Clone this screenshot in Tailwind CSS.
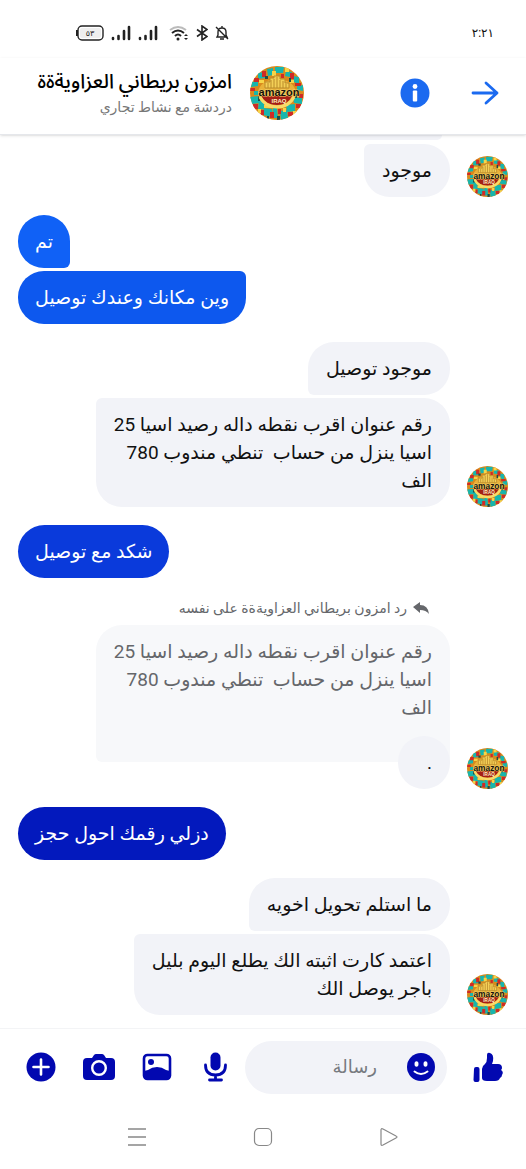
<!DOCTYPE html>
<html lang="ar" dir="rtl">
  <head>
    <meta charset="UTF-8" />
    <meta name="viewport" content="width=device-width, initial-scale=1.0" />
    <script src="https://cdn.jsdelivr.net/npm/@tailwindcss/browser@4"></script>
    <title>امزون بريطاني العزاويةةة</title>
  </head>
  <body class="bg-white text-[#111] font-['Roboto','DejaVu_Sans',sans-serif]">
    <!-- Shared avatar -->
    <svg class="hidden">
      <symbol id="avatar" viewBox="0 0 54 54">
        <rect width="54" height="54" fill="#d98a1c" />
        <path fill="#18b5ad" d="M8 7l6-1 1 6-7 1zM17 3l6-1v7l-5 1zM25 1h9l-1 6h-8zM36 5l6 1-2 5-5-1zM43 10l6 1v7l-5-2zM2 16l6-1v5l-7 1zM0 31l9-1v7l-8 1zM9 34l5 1v8l-6 1zM14 42l8 1v8l-9-2zM23 42h4l1 10h-6zM30 45l7-1 1 8-7 2zM36 39l9-1v7l-8 1zM43 31l9 1v6l-8-1zM47 20l6-1v6l-6-1zM4 25h5v4H4z" />
        <path fill="#cf2a27" d="M12 5h4v6h-4zM31 8h3v4h-3zM40 7h4v6h-4zM4 12h5v4H4zM45 17h6v3h-6zM0 22h5v3H0zM3 38h5v5H3zM11 44h3v5h-3zM20 46h4v6h-4zM28 43h3v5h-3zM38 46h5v4h-5zM46 38h5v4h-5zM49 28h4v4h-4z" />
        <path fill="#f7d548" d="M22 5h4v5h-4zM35 2h4v4h-4zM9 14h5v3H9zM40 14h4v3h-4zM14 39h7v3h-7zM33 42h3v4h-3zM8 43h3v4H8zM43 45h4v4h-4z" />
        <path fill="#1c4d4a" d="M15 10h3v3h-3zM39 12h2v4h-2zM8 30h2v5H8zM27 50h3v4h-3zM44 28h3v4h-3zM17 50h2v4h-2z" />
        <ellipse cx="27" cy="27" rx="19" ry="14" fill="#e9b23a" />
        <path fill="#f3cf57" stroke="#b98a2a" stroke-width="1" d="M15 22v-6h5v-4h4v-2h6v3h5v4h4v5z" />
        <path stroke="#b98a2a" stroke-width="1" d="M18 17v5M21 14v8M24 13v9M27 11v11M30 14v8M33 15v7M36 18v4" />
        <path fill="#a51f16" d="M11 30h31q-4 9-15 9t-16-9z" />
        <path fill="none" stroke="#f8da68" stroke-width="3" d="M10 31q5 10 17 10t17-10" />
        <text x="29" y="30" direction="ltr" text-anchor="middle" class="font-['Liberation_Sans',sans-serif] text-[11px] font-bold" fill="#16120c" stroke="#f5d571" stroke-width="1" paint-order="stroke">amazon</text>
        <text x="29" y="37" direction="ltr" text-anchor="middle" class="font-['Liberation_Sans',sans-serif] text-[6px] font-bold" fill="#fff3c0">IRAQ</text>
      </symbol>
    </svg>

    <div class="flex min-h-screen flex-col">
      <!-- Status bar -->
      <div class="flex h-[58px] items-center justify-between pt-2 pr-8 pl-[76px]">
        <span class="text-xs">٢:٢١</span>
        <div class="flex items-center gap-[7px]" dir="ltr">
          <svg class="h-4 w-7" viewBox="0 0 28 16" fill="none">
            <rect x="2" y="1" width="25" height="14" rx="4" stroke="#222" stroke-width="1.4" />
            <path d="M1 5v6" stroke="#222" stroke-width="2" />
            <rect x="4" y="3" width="21" height="10" rx="2" fill="#eee" />
            <text x="14" y="11" text-anchor="middle" class="text-[8px]" fill="#222">٥٣</text>
          </svg>
          <svg class="h-4 w-5" viewBox="0 0 20 16" stroke="#222" stroke-width="2.6" stroke-linecap="round"><path d="M2 14v-1M7.5 14v-3M13 14V6M18 14V2" /></svg>
          <svg class="h-4 w-5" viewBox="0 0 20 16" stroke="#222" stroke-width="2.6" stroke-linecap="round"><path d="M2 14v-1M7.5 14v-3M13 14V6M18 14V2" /></svg>
          <svg class="ml-1 h-4 w-5" viewBox="0 0 20 16" fill="none" stroke-width="2">
            <path d="M1 5q8-6 16 0" stroke="#bbb" />
            <path d="M3 8q6-5 12 0M6 11q3-3 6 0" stroke="#222" />
            <circle cx="9" cy="14" r="1.5" fill="#222" />
            <path d="M15 11l2-2 2 2zM15 13l2 2 2-2z" fill="#222" />
          </svg>
          <svg class="h-4 w-3" viewBox="0 0 12 16" fill="none" stroke="#222" stroke-width="1.6"><path d="M1 4.5l10 7L6 15V1l5 3.5-10 7" /></svg>
          <svg class="h-4 w-[14px]" viewBox="0 0 14 16" fill="none" stroke="#222" stroke-width="1.4"><path d="M2 12h10l-1-2V7q0-4-4-4T3 7v3zM5 14h4M7 3V1M1 2l12 12" /></svg>
        </div>
      </div>

      <!-- Header -->
      <header class="relative z-10 flex h-[77px] items-center border-b border-gray-200 bg-white pr-[27px] pb-[6px] shadow-sm">
        <button class="text-[#1b6af0]" aria-label="رجوع">
          <svg class="size-7" viewBox="0 0 28 28" fill="none" stroke="currentColor" stroke-width="2.8" stroke-linecap="round" stroke-linejoin="round"><path d="M2 14h24M15 4l11 10-11 10" /></svg>
        </button>
        <button class="mr-[41px] text-[#1b6af0]" aria-label="معلومات">
          <svg class="size-[30px]" viewBox="0 0 30 30"><circle cx="15" cy="15" r="14.5" fill="currentColor" /><circle cx="15" cy="8.5" r="2.4" fill="#fff" /><rect x="12.8" y="12.5" width="4.4" height="11" rx="1" fill="#fff" /></svg>
        </button>
        <svg class="mr-24 size-[54px] rounded-full"><use href="#avatar" /></svg>
        <div class="mr-[18px]">
          <h1 class="font-['Roboto','Noto_Sans_Arabic','Noto_Sans','DejaVu_Sans',sans-serif] text-xl leading-7 font-medium text-black">امزون بريطاني العزاويةةة</h1>
          <p class="text-sm leading-6 text-[#777]">دردشة مع نشاط تجاري</p>
        </div>
      </header>

      <!-- Messages -->
      <main class="flex flex-1 flex-col gap-[18px] px-[18px] pb-[13px] text-[19px] leading-7">
        <div class="flex items-end gap-[17px]">
          <svg class="size-[41px] shrink-0 rounded-full"><use href="#avatar" /></svg>
          <div class="flex flex-col items-start gap-1">
            <div class="mr-2 h-[5px] w-[122px] rounded-br-[20px] bg-[#f2f3f8]"></div>
            <p class="rounded-[26px] rounded-tl-md bg-[#f2f3f8] px-[18px] pt-[13px] pb-3">موجود</p>
          </div>
        </div>

        <div class="flex flex-col items-end gap-[3px] text-white">
          <p class="rounded-[26px] rounded-br-md bg-[#1061f6] px-[17px] pt-[13px] pb-3">تم</p>
          <p class="rounded-[26px] rounded-tr-md bg-[#0d58ee] px-[17px] pt-[13px] pb-3">وين مكانك وعندك توصيل</p>
        </div>

        <div class="flex items-end gap-[17px]">
          <svg class="size-[41px] shrink-0 rounded-full"><use href="#avatar" /></svg>
          <div class="flex flex-col items-start gap-[3px]">
            <p class="rounded-[26px] rounded-bl-md bg-[#f2f3f8] px-[18px] pt-[13px] pb-3">موجود توصيل</p>
            <p class="rounded-[26px] rounded-tl-md bg-[#f2f3f8] px-[18px] pt-[13px] pb-3">رقم عنوان اقرب نقطه داله رصيد اسيا 25<br />اسيا ينزل من حساب &nbsp;تنطي مندوب 780<br />الف</p>
          </div>
        </div>

        <div class="flex flex-col items-end text-white">
          <p class="rounded-[27px] bg-[#0a3adb] px-[17px] pt-[13px] pb-3">شكد مع توصيل</p>
        </div>

        <div class="flex items-end gap-[17px]">
          <svg class="size-[41px] shrink-0 rounded-full"><use href="#avatar" /></svg>
          <div class="flex flex-col items-start">
            <div class="flex h-[29px] items-center gap-[6px] pr-[21px] pb-[6px] text-sm text-[#65676b]">
              <svg class="h-3 w-4" viewBox="0 0 16 12" fill="currentColor"><path d="M0 5l7-5v3q8 0 9 9-3-4-9-4v3z" /></svg>
              <span>رد امزون بريطاني العزاويةةة على نفسه</span>
            </div>
            <p class="rounded-t-[26px] rounded-bl-md bg-[#f7f8fa] px-[18px] pt-[13px] pb-10 text-[#65676b]">رقم عنوان اقرب نقطه داله رصيد اسيا 25<br />اسيا ينزل من حساب &nbsp;تنطي مندوب 780<br />الف</p>
            <p class="-mt-[26px] w-[52px] rounded-[27px] bg-[#f2f3f8] px-[18px] pt-[13px] pb-3">.</p>
          </div>
        </div>

        <div class="flex flex-col items-end text-white">
          <p class="rounded-[27px] bg-[#0319bd] px-[17px] pt-[13px] pb-3">دزلي رقمك احول حجز</p>
        </div>

        <div class="flex items-end gap-[17px]">
          <svg class="size-[41px] shrink-0 rounded-full"><use href="#avatar" /></svg>
          <div class="flex flex-col items-start gap-[3px]">
            <p class="rounded-[26px] rounded-bl-md bg-[#f2f3f8] px-[18px] pt-[13px] pb-3">ما استلم تحويل اخويه</p>
            <p class="rounded-[26px] rounded-tl-md bg-[#f2f3f8] px-[18px] pt-[13px] pb-3">اعتمد كارت اثبته الك يطلع اليوم بليل<br />باجر يوصل الك</p>
          </div>
        </div>
      </main>

      <!-- Composer -->
      <form class="flex h-[77px] items-center border-t border-gray-100 pr-[22px] pl-[25px] text-[#0208b0]">
        <button type="button" aria-label="إعجاب">
          <svg class="size-8" viewBox="0 0 32 32" fill="currentColor"><path d="M2 18q0-2 2-2h1.500q2 0 2 2v11q0 2-2 2H3.500q-2 0-2-2zM10 27V18q0-3 3-5 2-2 2-6V4q0-3 3-2 4 1 3 8l-1 3h6q4 0 4 4 0 1-1 2 3 2 1 5 0 2-2 3-1 3-5 3H15q-5 0-5-3z" /></svg>
        </button>
        <div class="mr-[25px] flex h-[53px] flex-1 items-center rounded-full bg-[#f2f3f8] pr-3 pl-4">
          <button type="button" class="shrink-0" aria-label="رموز تعبيرية">
            <svg class="size-7" viewBox="0 0 28 28"><circle cx="14" cy="14" r="14" fill="currentColor" /><ellipse cx="9.500" cy="11" rx="2" ry="2.800" fill="#fff" /><ellipse cx="18.500" cy="11" rx="2" ry="2.800" fill="#fff" /><path d="M7.500 18.500q6.500 5 13 0" fill="none" stroke="#fff" stroke-width="2" stroke-linecap="round" /></svg>
          </button>
          <input type="text" aria-label="رسالة" placeholder="رسالة" class="mr-[30px] w-full min-w-0 bg-transparent text-lg text-black outline-none placeholder:text-[#777a80]" />
        </div>
        <div class="mr-[14px] flex items-center gap-[26px]">
          <button type="button" aria-label="تسجيل صوتي">
            <svg class="size-8" viewBox="0 0 32 32" fill="none" stroke="currentColor" stroke-width="2.800" stroke-linecap="round"><rect x="11.500" y="1.500" width="10" height="18" rx="5" fill="currentColor" stroke="none" /><path d="M6.500 14q0 10 10 10t10-10M16.500 24v4M10.500 29h12" /></svg>
          </button>
          <button type="button" aria-label="صورة">
            <svg class="size-8" viewBox="0 0 32 32"><rect x="3" y="4" width="26" height="24" rx="3.500" fill="none" stroke="currentColor" stroke-width="2.600" /><circle cx="10" cy="11" r="3" fill="currentColor" /><path d="M3 20l4-1q4-3 9-3t9 3l4 1v6q0 2-2 2H5q-2 0-2-2z" fill="currentColor" /></svg>
          </button>
          <button type="button" aria-label="كاميرا">
            <svg class="size-8" viewBox="0 0 32 32"><path d="M9 7l2-3q1-1 2-1h6q1 0 2 1l2 3h5q4 0 4 4v14q0 4-4 4H4q-4 0-4-4V11q0-4 4-4z" fill="currentColor" /><circle cx="16" cy="17" r="6.800" fill="none" stroke="#fff" stroke-width="2.400" /></svg>
          </button>
          <button type="button" aria-label="المزيد">
            <svg class="size-8" viewBox="0 0 32 32"><circle cx="16" cy="16" r="14.500" fill="currentColor" /><path d="M16 8.500v15M8.500 16h15" stroke="#fff" stroke-width="2.600" stroke-linecap="round" /></svg>
          </button>
        </div>
      </form>

      <!-- Android navigation -->
      <nav class="flex h-16 items-center justify-center gap-[106px] text-[#888]">
        <button aria-label="رجوع للخلف">
          <svg class="size-5" viewBox="0 0 20 20" fill="none" stroke="currentColor" stroke-width="1.200" stroke-linejoin="round"><path d="M2 3q0-2 2-1l13 7q2 1 0 2L4 18q-2 1-2-1z" /></svg>
        </button>
        <button aria-label="الشاشة الرئيسية">
          <svg class="size-5" viewBox="0 0 20 20" fill="none" stroke="currentColor" stroke-width="1.200"><rect x="1.500" y="1.500" width="17" height="17" rx="4.500" /></svg>
        </button>
        <button aria-label="التطبيقات الأخيرة">
          <svg class="size-5" viewBox="0 0 20 20" stroke="currentColor" stroke-width="1.300"><path d="M1 2h18M1 10h18M1 18h18" /></svg>
        </button>
      </nav>
    </div>
  </body>
</html>
